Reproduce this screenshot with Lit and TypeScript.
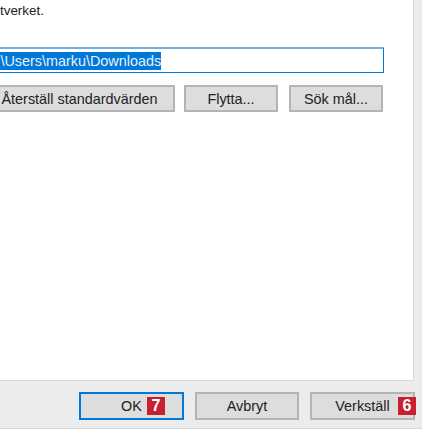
import { LitElement, html, css } from 'lit';
import { customElement } from 'lit/decorators.js';

@customElement('app-root')
export class AppRoot extends LitElement {
  static styles = css`
    :host {
      display: block;
      box-sizing: border-box;
      width: 422px;
      height: 429px;
      overflow: hidden;
      background: #ececec;
      border-bottom: 1px solid #d6d6d6;
      font-family: 'Liberation Sans', Arial, sans-serif;
      font-size: 14.4px;
      color: #222;
    }
    .panel {
      box-sizing: border-box;
      width: 414px;
      height: 381px;
      background: #fff;
      border-right: 1px solid #dadada;
      border-bottom: 1px solid #dadada;
    }
    .note {
      box-sizing: border-box;
      height: 47px;
      padding-top: 2px;
      font-size: 13.4px;
      line-height: 17px;
      white-space: nowrap;
    }
    .path {
      box-sizing: border-box;
      width: 385px;
      height: 26px;
      margin-left: -1px;
      border: 1px solid #0078d7;
      border-top: 2px solid #6fb1e4;
      display: flex;
      align-items: center;
      overflow: hidden;
    }
    .sel {
      background: #0078d7;
      color: #e8f2fb;
      height: 18px;
      line-height: 18px;
      margin-left: -14px;
      white-space: nowrap;
    }
    .tools {
      display: flex;
      margin: 12px 0 0 -16px;
    }
    button {
      box-sizing: border-box;
      height: 28px;
      padding: 0;
      background: #dcdddc;
      border: 2px solid #b4b4b4;
      font: inherit;
      color: inherit;
      display: flex;
      align-items: center;
      justify-content: center;
      position: relative;
    }
    .tools button { height: 27px; }
    .reset { width: 191px; }
    .move { width: 94px; margin-left: 9px; }
    .find { width: 94px; margin-left: 11px; }
    .footer {
      display: flex;
      padding: 11px 0 0 79px;
    }
    .ok { width: 105px; border-color: #0078d7; }
    .cancel { width: 104px; margin-left: 11px; }
    .apply { width: 105px; margin-left: 11px; }
    .badge {
      position: absolute;
      top: 3px;
      width: 18px;
      height: 18px;
      background: #c8202f;
      color: #fff;
      font-weight: 700;
      font-size: 16px;
      line-height: 18px;
      text-align: center;
    }
    .ok .badge { left: 66px; }
    .apply .badge { right: -3px; }
  `;

  render() {
    return html`
      <div class="panel">
        <div class="note">tverket.</div>
        <div class="path"><span class="sel">C:\\Users\\marku\\Downloads</span></div>
        <div class="tools">
          <button class="reset">Återställ standardvärden</button>
          <button class="move">Flytta...</button>
          <button class="find">Sök mål...</button>
        </div>
      </div>
      <div class="footer">
        <button class="ok">OK<span class="badge">7</span></button>
        <button class="cancel">Avbryt</button>
        <button class="apply">Verkställ<span class="badge">6</span></button>
      </div>
    `;
  }
}
